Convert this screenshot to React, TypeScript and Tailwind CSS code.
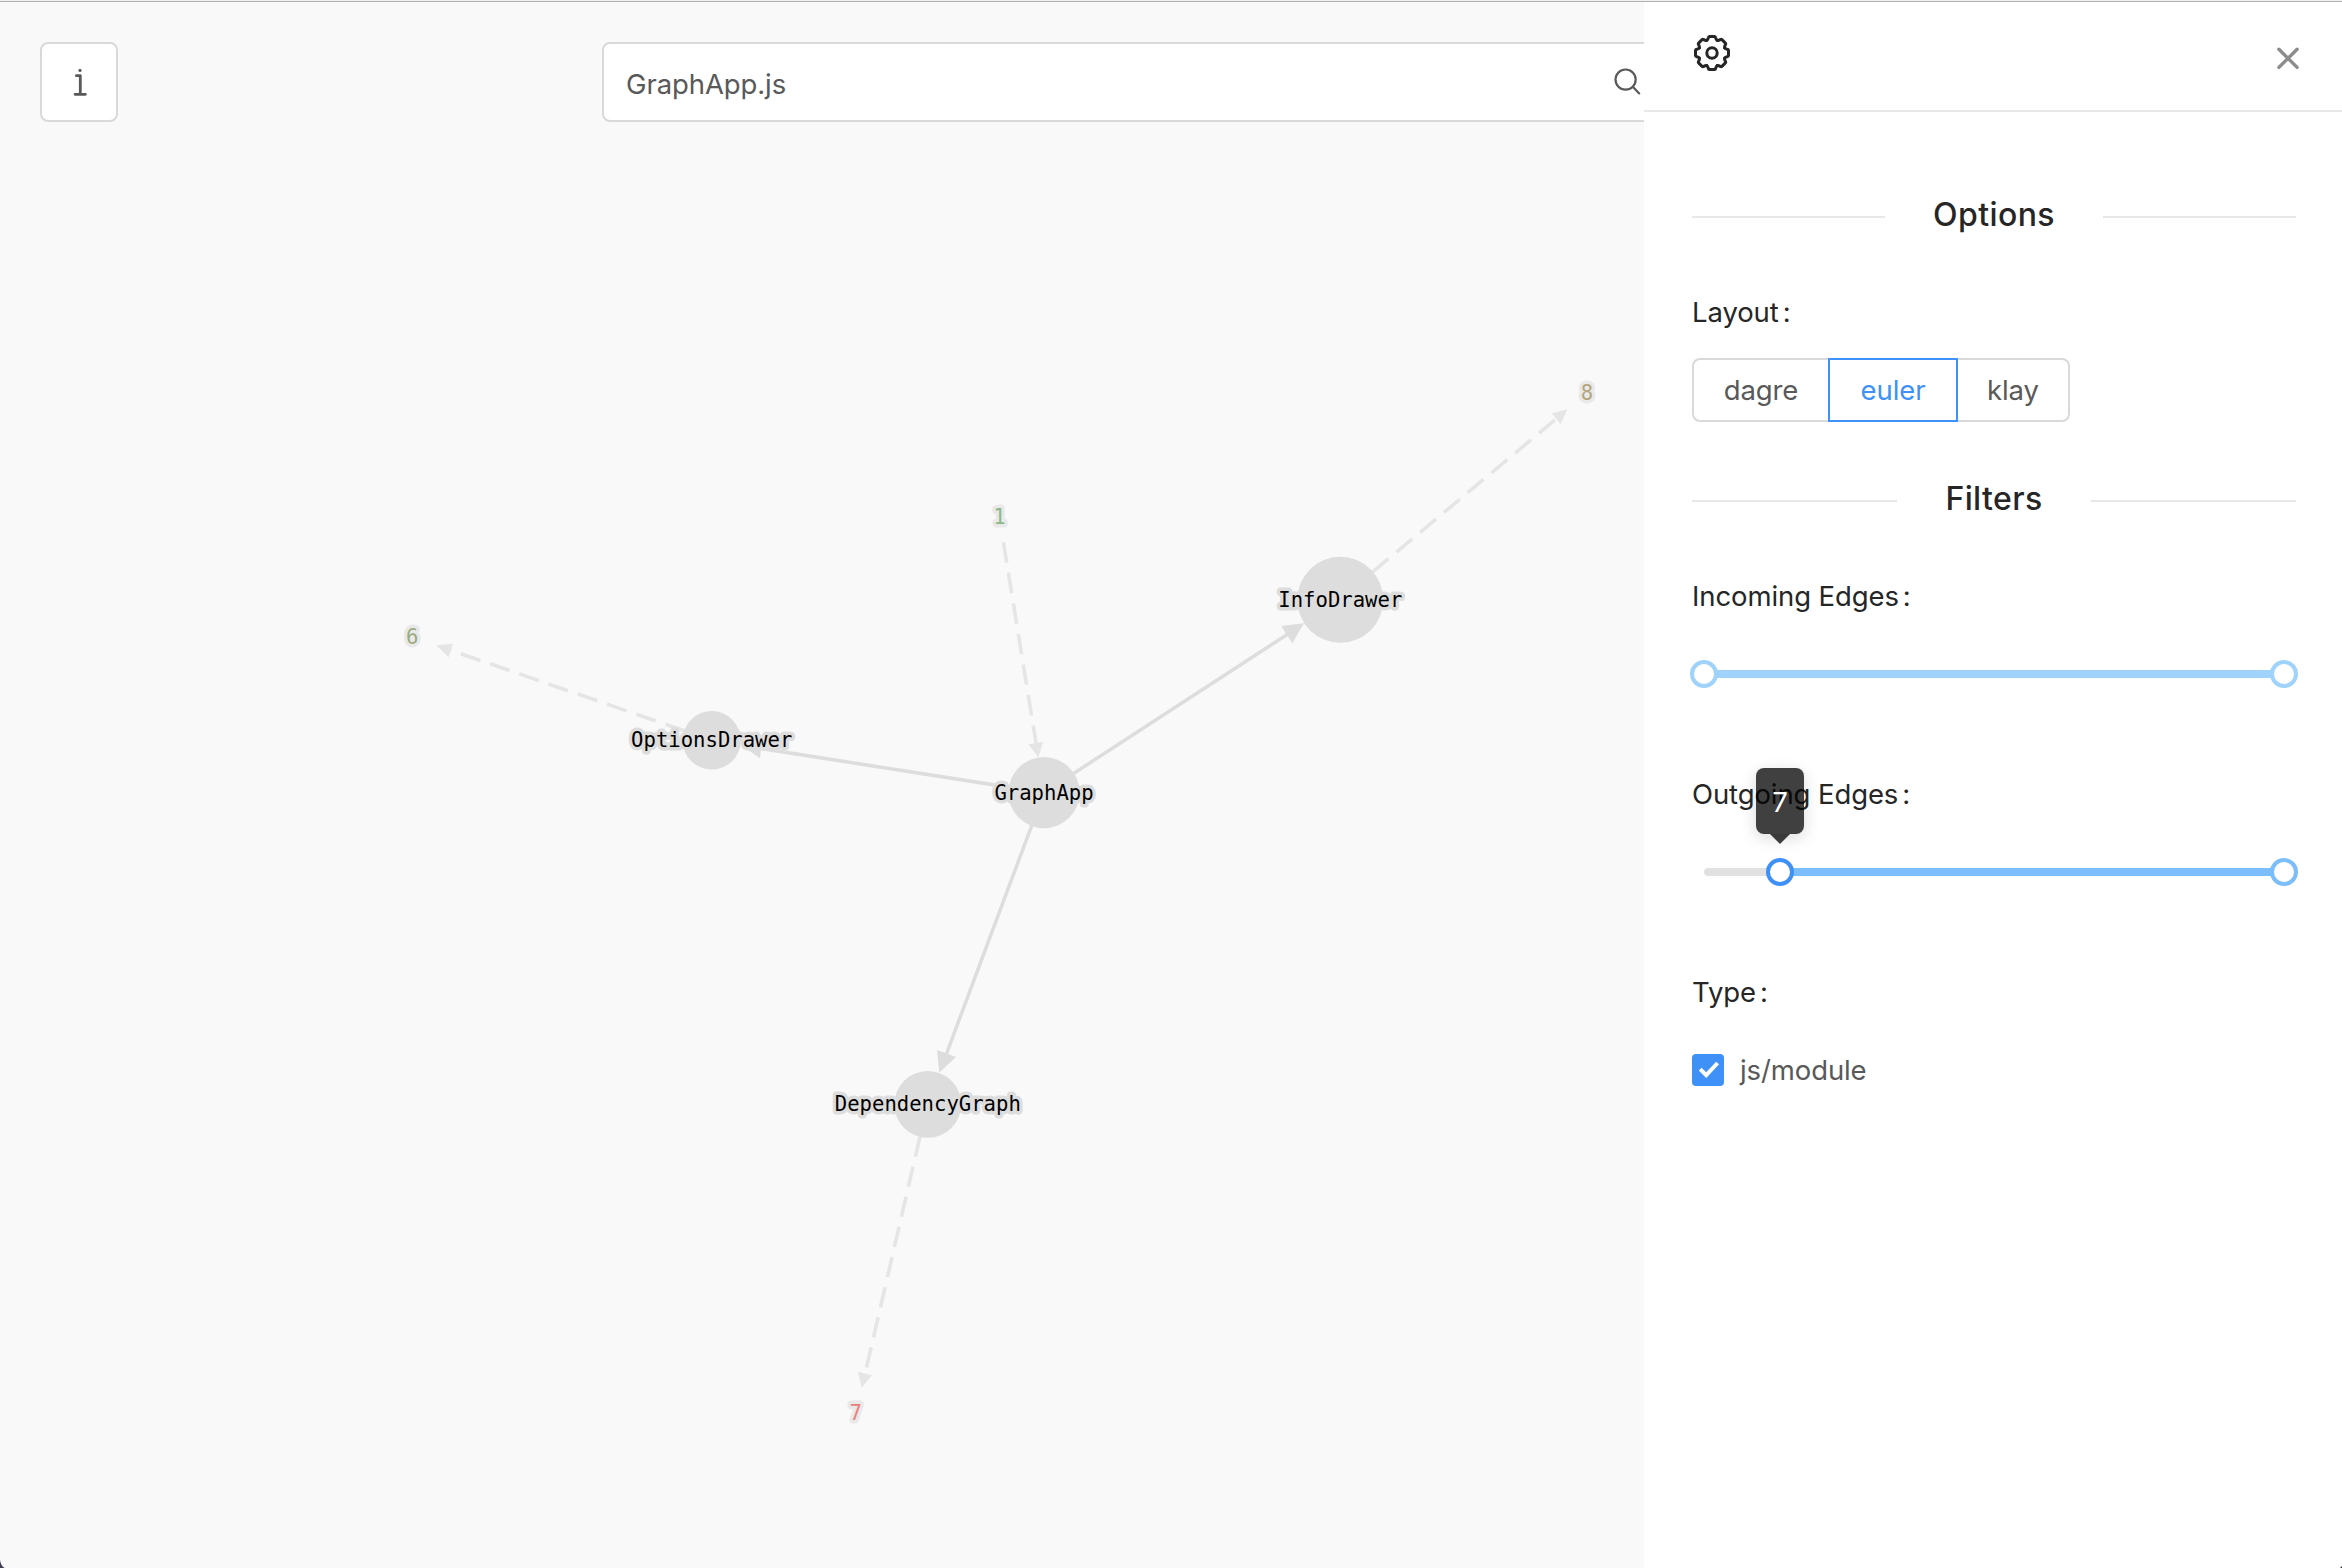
import type { ReactNode } from "react";

const nodes = [
  { label: "InfoDrawer", x: 1340.3, y: 599.8, r: 43, base: 606.7 },
  { label: "OptionsDrawer", x: 711.7, y: 740.3, r: 29.2, base: 747.2 },
  { label: "GraphApp", x: 1044, y: 792.7, r: 35.6, base: 799.5 },
  { label: "DependencyGraph", x: 927.8, y: 1104.4, r: 33.4, base: 1111 },
];

const counts = [
  { label: "8", x: 1587, base: 400, color: "#b3a67c" },
  { label: "6", x: 412.2, base: 644.3, color: "#9cab7e" },
  { label: "1", x: 999.5, base: 524, color: "#8fb784" },
  { label: "7", x: 855.7, base: 1419.6, color: "#e8817c" },
];

const solidEdges = [
  { d: "M1044 792.7L1288 634", head: "1304,623.3 1281.3,626 1292.3,643.3" },
  { d: "M1044 792.7L758 748", head: "741,745 762,738 760,758.3" },
  { d: "M1044 792.7L946 1055", head: "939.3,1072.7 937,1050 956,1057" },
];

const dashedEdges = [
  { d: "M1372.7 571.9L1556 419", head: "1567.3,409.3 1551.7,413.3 1560.7,424.3" },
  { d: "M685 731L450 650", head: "436.3,645.3 453,643.7 448.7,657.3" },
  { d: "M1003.4 542.3L1036.2 744", head: "1038.3,757.3 1028.3,744.3 1043.3,742" },
  { d: "M920 1136.5L865 1374", head: "861.7,1387.7 858,1371.7 872,1375.3" },
];

function Graph() {
  return (
    <svg className="absolute inset-0 tracking-normal" width="2342" height="1568" viewBox="0 0 2342 1568">
      {dashedEdges.map((e) => (
        <g key={e.d} stroke="#e5e5e5" fill="#e5e5e5">
          <path d={e.d} strokeWidth="3.6" strokeDasharray="20.6 10.33" />
          <polygon points={e.head} stroke="none" />
        </g>
      ))}
      {solidEdges.map((e) => (
        <g key={e.d} stroke="#dddddd" fill="#dddddd">
          <path d={e.d} strokeWidth="3.5" />
          <polygon points={e.head} stroke="none" />
        </g>
      ))}
      {nodes.map((n) => (
        <circle key={n.label} cx={n.x} cy={n.y} r={n.r} fill="#dddddd" />
      ))}
      <g fontFamily="'DejaVu Sans Mono', monospace" fontSize="20.6" textAnchor="middle" strokeLinejoin="round" strokeWidth="6.8">
        {nodes.map((n) => (
          <text key={n.label} x={n.x} y={n.base} fill="#000" stroke="#dddddd" paintOrder="stroke">
            {n.label}
          </text>
        ))}
        {counts.map((n) => (
          <text key={n.label} x={n.x} y={n.base} fill={n.color} stroke="#e9e9e9" paintOrder="stroke">
            {n.label}
          </text>
        ))}
      </g>
    </svg>
  );
}

const tooth = "M-5.2 -12.6Q-4.1 -13.4 -3.7 -15.2Q-3.5 -16.5 -2.5 -16.5H2.5Q3.5 -16.5 3.7 -15.2Q4.1 -13.4 5.2 -12.6";

function GearIcon() {
  return (
    <svg width="36" height="36" viewBox="-18 -18 36 36" fill="none" stroke="#262626" strokeWidth="3" strokeLinecap="round" strokeLinejoin="round">
      <circle r="5.2" />
      {[0, 45, 90, 135, 180, 225, 270, 315].map((a) => (
        <path key={a} d={tooth} transform={`rotate(${a})`} />
      ))}
    </svg>
  );
}

function SearchIcon() {
  return (
    <svg width="28" height="28" viewBox="0 0 28 28" fill="none" stroke="#595959" strokeWidth="2.2" strokeLinecap="round">
      <circle cx="12.6" cy="11.6" r="10.1" />
      <path d="M20 19l6.2 6.4" />
    </svg>
  );
}

function CloseIcon() {
  return (
    <svg className="mt-[9px]" width="28" height="28" viewBox="0 0 28 28" fill="none" stroke="#8c8c8c" strokeWidth="3.4" strokeLinecap="round">
      <path d="M4.9 5.2l18.2 18.2M23.1 5.2L4.9 23.4" />
    </svg>
  );
}

function Divider({ children }: { children: ReactNode }) {
  return (
    <div className="flex h-12 items-center text-[32px] font-medium tracking-[0.4px] text-[#262626]">
      <span className="mt-0.5 h-0.5 flex-1 bg-[#e8e8e8]" />
      <span className="px-12 pb-0.5">{children}</span>
      <span className="mt-0.5 h-0.5 flex-1 bg-[#e8e8e8]" />
    </div>
  );
}

function Label({ children }: { children: ReactNode }) {
  return (
    <div className="flex h-10 items-center gap-1 pt-0.5 text-[#262626]">
      <span>{children}</span>
      <span>:</span>
    </div>
  );
}

function Handle({ className }: { className: string }) {
  return <span className={`absolute top-0 size-7 rounded-full border-4 bg-white ${className}`} />;
}

export default function App() {
  return (
    <div className="relative flex h-[1568px] w-[2342px] overflow-hidden bg-[#f9f9f9] font-['Inter',sans-serif] text-[27.5px] tracking-[-0.1px] text-[#595959]">
      <Graph />
      <main className="relative flex h-full w-[1644px] items-start overflow-hidden pt-[42px] pl-10">
        <button className="flex h-20 w-[78px] shrink-0 items-center justify-center rounded-lg border-2 border-[#d9d9d9] bg-white">
          <svg width="16" height="30" viewBox="71 67 16 30" fill="none" stroke="#595959" strokeWidth="2.8" strokeLinecap="round" strokeLinejoin="round">
            <path d="M76.4 75.7h3.9v18.6M75.1 94.3h10.3" />
            <circle cx="80" cy="70.4" r="1.6" fill="#595959" stroke="none" />
          </svg>
        </button>
        <div className="ml-[484px] flex h-20 w-[1138px] shrink-0 items-center rounded-lg border-2 border-[#d9d9d9] bg-white pl-[22px]">
          <span className="w-[987px] pt-[5px]">GraphApp.js</span>
          <SearchIcon />
        </div>
      </main>

      <aside className="relative flex h-full w-[698px] flex-col bg-white">
        <header className="flex h-28 items-start justify-between border-b-2 border-[#e8e8e8] pt-[35px] pr-[40px] pl-[50px]">
          <GearIcon />
          <CloseIcon />
        </header>
        <div className="flex flex-col pt-20 pr-[46px] pl-12">
          <Divider>Options</Divider>
          <div className="mt-[52px]">
            <Label>Layout</Label>
          </div>
          <div className="mt-[26px] flex h-16">
            <button className="w-[138px] rounded-l-lg border-2 border-[#d9d9d9] pt-px">dagre</button>
            <button className="relative -ml-0.5 w-[130px] border-2 border-[#4091f7] pt-px text-[#4091f7]">euler</button>
            <button className="w-28 rounded-r-lg border-2 border-l-0 border-[#d9d9d9] pt-px">klay</button>
          </div>
          <div className="mt-[54px]">
            <Divider>Filters</Divider>
          </div>
          <div className="mt-[52px]">
            <Label>Incoming Edges</Label>
          </div>
          <div className="relative mt-11 flex h-7 items-center px-3">
            <div className="h-2 w-full bg-[#a0d3fb]" />
            <Handle className="-left-0.5 border-[#a0d3fb]" />
            <Handle className="-right-0.5 border-[#a0d3fb]" />
          </div>
          <div className="mt-[86px]">
            <Label>Outgoing Edges</Label>
          </div>
          <div className="relative mt-11 flex h-7 items-center px-3">
            <div className="h-2 w-[76px] rounded-l bg-[#e1e1e1]" />
            <div className="h-2 flex-1 bg-[#7bbefa]" />
            <Handle className="left-[74px] border-[#4091f7]" />
            <Handle className="-right-0.5 border-[#7bbefa]" />
            <div className="absolute -top-[90px] left-16 flex flex-col items-center">
              <div className="flex h-[66px] w-12 items-center justify-center rounded-lg bg-black/75 pt-1 text-white shadow-[0_4px_16px_rgba(0,0,0,0.15)]">7</div>
              <svg width="20" height="10" viewBox="0 0 20 10">
                <path d="M0 0h20L10 10z" fill="#000" fillOpacity="0.75" />
              </svg>
            </div>
          </div>
          <div className="mt-[86px]">
            <Label>Type</Label>
          </div>
          <label className="mt-[38px] flex h-10 items-center">
            <span className="flex size-8 items-center justify-center rounded bg-[#4091f7]">
              <svg width="32" height="32" viewBox="0 0 32 32" fill="none" stroke="#fff" strokeWidth="4">
                <path d="M8.2 15.2l6 6L25.6 9" />
              </svg>
            </span>
            <span className="ml-4 pt-px">js/module</span>
          </label>
        </div>
      </aside>

      <div className="absolute inset-x-0 top-0 h-0.5 border-b border-[#b3b3b3] bg-[#f0f0f0]" />
      <svg className="absolute bottom-0 left-0" width="5" height="8" viewBox="0 0 5 8">
        <path d="M0 0Q0.5 5 4.5 8H0z" fill="#3d3d55" />
      </svg>
      <svg className="absolute right-0 bottom-0" width="2" height="2" viewBox="0 0 2 2">
        <path d="M2 0V2H0z" fill="#333333" />
      </svg>
    </div>
  );
}
